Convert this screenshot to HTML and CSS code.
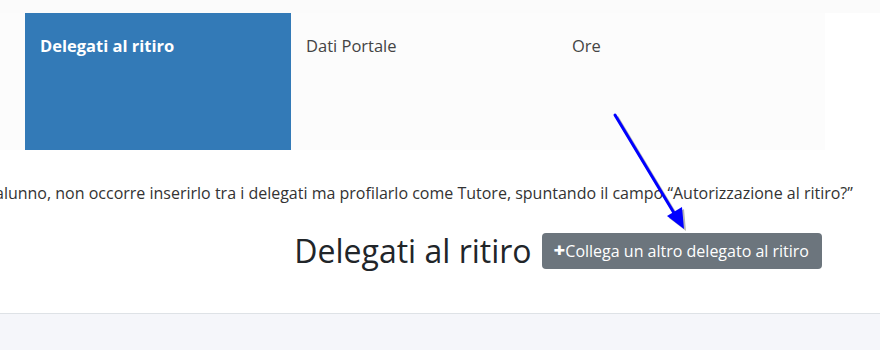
FILE: index.html
```html
<!DOCTYPE html>
<html>
<head>
    <meta name="viewport" content="width=device-width, initial-scale=1">
    <link rel="stylesheet" href="styles.css">
</head>
<body>

<div class="topstrip"></div>
<div class="tabrow">
    <div class="tabs">
        <div class="tab active">Delegati al ritiro</div>
        <div class="tab">Dati Portale</div>
        <div class="tab">Ore</div>
    </div>
</div>

<p class="note">alunno, non occorre inserirlo tra i delegati ma profilarlo come Tutore, spuntando il campo “Autorizzazione al ritiro?”</p>

<div class="header">
    <h2>Delegati al ritiro</h2>
    <button class="btn"><span class="plus">+</span>Collega un altro delegato al ritiro</button>
</div>

<div class="footer"></div>

<!-- annotation arrow -->
<svg class="arrow" width="880" height="350" viewBox="0 0 880 350">
    <g transform="translate(2,2)" opacity="0.35">
        <line x1="615" y1="115" x2="674" y2="213" stroke="#333" stroke-width="3"/>
        <polygon points="684,229 667,216 682,207" fill="#333"/>
    </g>
    <line x1="615" y1="115" x2="674" y2="213" stroke="#0000ff" stroke-width="3" stroke-linecap="round"/>
    <polygon points="684,229 667,216 682,207" fill="#0000ff"/>
</svg>

</body>
</html>
```

FILE: styles.css
```css
body {
    margin: 0;
    font-family: "Open Sans", "Liberation Sans", sans-serif;
    color: #333;
    background: #fff;
    width: 880px;
    height: 350px;
    overflow: hidden;
    position: relative;
}

.topstrip {
    height: 13px;
    background: #fbfbfb;
}

.tabrow {
    display: flex;
}

.tabs {
    width: 800px;
    height: 137px;
    padding-left: 25px;
    background: #fcfcfc;
    display: flex;
}

.tab {
    width: 266px;
    padding: 21px 15px 0;
    box-sizing: border-box;
    font-size: 16.5px;
    color: #444;
}

.tab.active {
    background: #337ab7;
    color: #fff;
    font-weight: bold;
}

.note {
    margin: 32px 0 0 -5px;
    font-size: 16px;
    white-space: nowrap;
    color: #333;
}

.header {
    display: flex;
    align-items: center;
    justify-content: flex-end;
    padding-right: 58px;
    margin-top: 25px;
    gap: 10px;
}

.header h2 {
    margin: 0;
    font-size: 32px;
    font-weight: 500;
    color: #212529;
}

.btn {
    font-family: "Open Sans", "Liberation Sans", sans-serif;
    font-size: 16px;
    color: #fff;
    background: #6c757d;
    border: none;
    border-radius: 4px;
    height: 36px;
    padding: 0 13px 0 12px;
}

.plus {
    font-weight: 800;
    font-size: 20px;
    line-height: 1;
}

.footer {
    position: absolute;
    left: 0;
    right: 0;
    top: 313px;
    bottom: 0;
    background: #f5f6fa;
    border-top: 1px solid #dee2e6;
}

.arrow {
    position: absolute;
    left: 0;
    top: 0;
    pointer-events: none;
}
```
